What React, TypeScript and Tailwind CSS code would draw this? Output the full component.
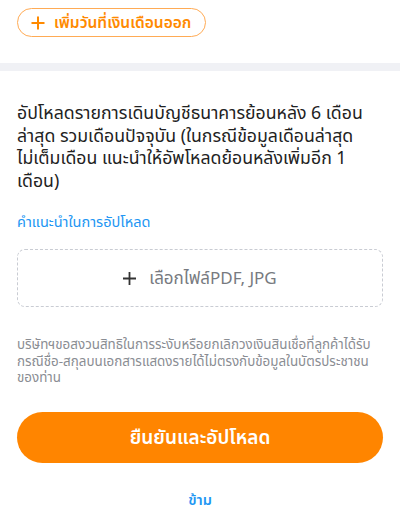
import React from "react";

const font = { fontFamily: '"Noto Sans", "Noto Sans Thai", "DejaVu Sans", sans-serif' };

export default function App() {
  return (
    <div className="w-full bg-white" style={font}>
      <div className="pt-2 px-[17px]">
        <button className="h-[29px] flex items-center gap-[9px] pl-[13px] pr-[14px] rounded-full border border-[#ffab55] text-[#ff8a00] text-[15.5px] font-semibold leading-none">
          <svg width="14" height="14" viewBox="0 0 14 14" fill="none" stroke="#ff8a00" strokeWidth="2">
            <path d="M7 0.5v13M0.5 7h13" />
          </svg>
          <span>เพิ่มวันที่เงินเดือนออก</span>
        </button>
      </div>
      <div className="mt-[26px] h-2 bg-[#f0f1f5]" />
      <div className="px-[17px] pt-[30px]">
        <p className="text-[17.7px] leading-[22.5px] text-[#222222] whitespace-nowrap">
          อัปโหลดรายการเดินบัญชีธนาคารย้อนหลัง 6 เดือน
          <br />
          ล่าสุด รวมเดือนปัจจุบัน (ในกรณีข้อมูลเดือนล่าสุด
          <br />
          ไม่เต็มเดือน แนะนำให้อัพโหลดย้อนหลังเพิ่มอีก 1
          <br />
          เดือน)
        </p>
        <div className="mt-5 text-[14.5px] leading-5 text-[#2196f3]">คำแนะนำในการอัปโหลด</div>
        <div className="mt-[18px] h-[58px] rounded-lg border border-dashed border-[#c9ccd3] flex items-center justify-center gap-[13px] text-[17px] text-[#777a80]">
          <svg width="13" height="13" viewBox="0 0 13 13" fill="none" stroke="#333" strokeWidth="1.8">
            <path d="M6.5 0v13M0 6.5h13" />
          </svg>
          <span>เลือกไฟล์PDF, JPG</span>
        </div>
        <p className="mt-[29px] text-[13.4px] leading-[16.5px] text-[#8a8d93] whitespace-nowrap">
          บริษัทฯขอสงวนสิทธิในการระงับหรือยกเลิกวงเงินสินเชื่อที่ลูกค้าได้รับ
          <br />
          กรณีชื่อ-สกุลบนเอกสารแสดงรายได้ไม่ตรงกับข้อมูลในบัตรประชาชน
          <br />
          ของท่าน
        </p>
        <button className="mt-[26px] w-full h-[51px] rounded-full bg-[#ff8500] text-white text-[19px] font-semibold">
          ยืนยันและอัปโหลด
        </button>
        <div className="mt-[26px] text-center text-[14.5px] leading-5 font-semibold text-[#2196f3]">ข้าม</div>
      </div>
    </div>
  );
}
